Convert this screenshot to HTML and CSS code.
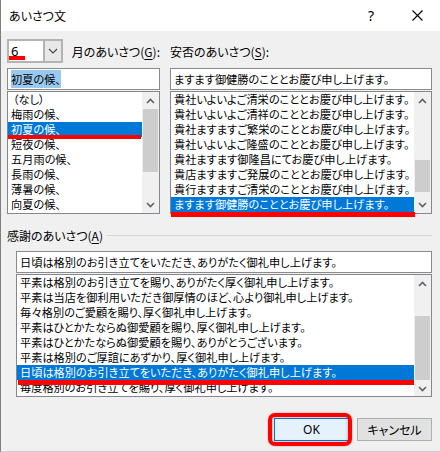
FILE: index.html
```html
<!DOCTYPE html>
<html lang="ja">
<head>
<meta charset="utf-8">
<link rel="stylesheet" href="styles.css">
</head>
<body>
<div class="win">
  <div class="titlebar">
    <span class="title">あいさつ文</span>
    <span class="help">?</span>
    <span class="close"><svg width="11" height="11" viewBox="0 0 11 11"><path d="M0.5 0.5L10.5 10.5M10.5 0.5L0.5 10.5" stroke="#000" stroke-width="1.1" fill="none"/></svg></span>
  </div>
  <div class="content">
    <div class="top">
      <div class="col">
        <div class="row1">
          <div class="combo">
            <span class="combo-val">6</span>
            <span class="combo-btn"><svg width="10" height="6" viewBox="0 0 10 6"><path d="M1 1L5 5L9 1" stroke="#444" stroke-width="1.1" fill="none"/></svg></span>
            <span class="mark mark-combo"></span>
          </div>
          <span class="label lbl-g">月のあいさつ(<u>G</u>):</span>
        </div>
        <div class="textbox"><span class="hl">初夏の候、</span></div>
        <div class="list">
          <div class="items">
            <div class="item none">（なし）</div>
            <div class="item">梅雨の候、</div>
            <div class="item sel">初夏の候、</div>
            <div class="item">短夜の候、</div>
            <div class="item">五月雨の候、</div>
            <div class="item">長雨の候、</div>
            <div class="item">薄暑の候、</div>
            <div class="item">向夏の候、</div>
          </div>
          <div class="sb">
            <span class="arrow"><svg width="9" height="6" viewBox="0 0 9 6"><path d="M1 5L4.5 1.5L8 5" stroke="#606060" stroke-width="1.6" fill="none"/></svg></span>
            <div class="track"><div class="thumb thumb-a"></div></div>
            <span class="arrow"><svg width="9" height="6" viewBox="0 0 9 6"><path d="M1 1L4.5 4.5L8 1" stroke="#606060" stroke-width="1.6" fill="none"/></svg></span>
          </div>
          <span class="mark mark-a"></span>
        </div>
      </div>
      <div class="col">
        <div class="row1">
          <span class="label">安否のあいさつ(<u>S</u>):</span>
        </div>
        <div class="textbox">ますます御健勝のこととお慶び申し上げます。</div>
        <div class="list">
          <div class="items">
            <div class="item">貴社いよいよご清栄のこととお慶び申し上げます。</div>
            <div class="item">貴社いよいよご清祥のこととお慶び申し上げます。</div>
            <div class="item">貴社ますますご繁栄のこととお慶び申し上げます。</div>
            <div class="item">貴社いよいよご隆盛のこととお慶び申し上げます。</div>
            <div class="item">貴社ますます御隆昌にてお慶び申し上げます。</div>
            <div class="item">貴店ますますご発展のこととお慶び申し上げます。</div>
            <div class="item">貴行ますますご清栄のこととお慶び申し上げます。</div>
            <div class="item sel">ますます御健勝のこととお慶び申し上げます。</div>
          </div>
          <div class="sb">
            <span class="arrow"><svg width="9" height="6" viewBox="0 0 9 6"><path d="M1 5L4.5 1.5L8 5" stroke="#606060" stroke-width="1.6" fill="none"/></svg></span>
            <div class="track"><div class="thumb thumb-b"></div></div>
            <span class="arrow"><svg width="9" height="6" viewBox="0 0 9 6"><path d="M1 1L4.5 4.5L8 1" stroke="#606060" stroke-width="1.6" fill="none"/></svg></span>
          </div>
          <span class="mark mark-b"></span>
        </div>
      </div>
    </div>

    <div class="section">
      <span class="label">感謝のあいさつ(<u>A</u>)</span>
      <span class="rule"></span>
    </div>

    <div class="bottom">
      <div class="textbox">日頃は格別のお引き立てをいただき、ありがたく御礼申し上げます。</div>
      <div class="list">
        <div class="items">
          <div class="item">平素は格別のお引き立てを賜り、ありがたく厚く御礼申し上げます。</div>
          <div class="item">平素は当店を御利用いただき御厚情のほど、心より御礼申し上げます。</div>
          <div class="item">毎々格別のご愛顧を賜り、厚く御礼申し上げます。</div>
          <div class="item">平素はひとかたならぬ御愛顧を賜り、厚く御礼申し上げます。</div>
          <div class="item">平素はひとかたならぬ御愛顧を賜り、ありがとうございます。</div>
          <div class="item">平素は格別のご厚誼にあずかり、厚く御礼申し上げます。</div>
          <div class="item sel">日頃は格別のお引き立てをいただき、ありがたく御礼申し上げます。</div>
          <div class="item">毎度格別のお引き立てを賜り、厚く御礼申し上げます。</div>
        </div>
        <div class="sb">
          <span class="arrow"><svg width="9" height="6" viewBox="0 0 9 6"><path d="M1 5L4.5 1.5L8 5" stroke="#606060" stroke-width="1.6" fill="none"/></svg></span>
          <div class="track"><div class="thumb thumb-c"></div></div>
          <span class="arrow"><svg width="9" height="6" viewBox="0 0 9 6"><path d="M1 1L4.5 4.5L8 1" stroke="#606060" stroke-width="1.6" fill="none"/></svg></span>
        </div>
        <span class="mark mark-c"></span>
      </div>
    </div>

    <div class="buttons">
      <div class="btn ok">OK<span class="okmark"></span></div>
      <div class="btn">キャンセル</div>
    </div>
  </div>
</div>
</body>
</html>
```
FILE: styles.css
```css
html, body {
  margin: 0;
  padding: 0;
}
body {
  width: 440px;
  height: 452px;
  overflow: hidden;
  background: #f0f0f0;
  font-family: "Noto Sans CJK JP", "Noto Sans", sans-serif;
  font-size: 12px;
  font-feature-settings: "palt";
  color: #000;
}
.win {
  width: 439px;
  height: 451px;
  border-left: 1px solid #7f7f7f;
  border-bottom: 1px solid #cfcfcf;
  background: #f0f0f0;
}
.titlebar {
  height: 31px;
  background: #fff;
  display: flex;
  align-items: center;
}
.title {
  margin-left: 8px;
  font-size: 12px;
  margin-top: -1px;
}
.help {
  margin-left: auto;
  font-family: "Noto Sans", sans-serif;
  font-size: 14px;
  margin-right: 38px;
  margin-top: -1px;
}
.close {
  display: flex;
  margin-right: 17px;
  margin-top: -1px;
}
.content {
  padding: 8px 8px 0 6px;
}
.top {
  display: grid;
  grid-template-columns: 153px 262px;
  column-gap: 10px;
}
.col {
  display: flex;
  flex-direction: column;
}
.row1 {
  height: 24px;
  display: flex;
  align-items: center;
  margin-bottom: 5px;
  white-space: nowrap;
}
.combo {
  position: relative;
  width: 62px;
  height: 24px;
  box-sizing: border-box;
  border: 2px solid #b3b3b3;
  background: #fff;
  display: flex;
  align-items: center;
}
.combo-val {
  flex: 1;
  padding-left: 2px;
  font-family: "Noto Sans", sans-serif;
  font-size: 13px;
}
.combo-btn {
  width: 16px;
  height: 100%;
  border-left: 2px solid #b3b3b3;
  background: #e8e8e8;
  display: flex;
  align-items: center;
  justify-content: center;
}
.lbl-g {
  margin-left: 9px;
}
.label u {
  text-decoration-thickness: 1px;
  text-underline-offset: 2px;
}
.textbox {
  height: 22px;
  box-sizing: border-box;
  border: 1px solid #8a8a8a;
  background: #fff;
  display: flex;
  align-items: center;
  padding-left: 3px;
  white-space: nowrap;
  overflow: hidden;
  margin-bottom: 1px;
  font-size: 11.2px;
}
.hl {
  background: #99c9ef;
  padding: 1px 0;
}
.list {
  position: relative;
  height: 123px;
  box-sizing: border-box;
  border: 1px solid #828790;
  background: #fff;
  display: flex;
}
.items {
  flex: 1;
  overflow: hidden;
  min-width: 0;
}
.item {
  height: 15px;
  line-height: 15px;
  padding-left: 3px;
  white-space: nowrap;
  font-size: 11.2px;
}
.item.none {
  padding-left: 5px;
}
.item.sel {
  background: #0078d7;
  color: #fff;
}
.sb {
  width: 17px;
  background: #f0f0f0;
  display: flex;
  flex-direction: column;
}
.arrow {
  height: 17px;
  display: flex;
  align-items: center;
  justify-content: center;
  flex: none;
}
.track {
  flex: 1;
  display: flex;
  flex-direction: column;
}
.thumb {
  background: #cdcdcd;
  margin: 0 1px;
}
.thumb-a { margin-top: 0; height: 63px; }
.thumb-b { margin-top: 51px; height: 32px; }
.thumb-c { margin-top: 24px; height: 64px; }

.mark {
  position: absolute;
  background: #ff0000;
}
.mark-combo { left: 0; top: 15px; width: 16px; height: 4px; }
.mark-a { left: 0; top: 43px; width: 133px; height: 4px; }
.mark-b { left: 0; top: 120px; width: 244px; height: 5px; }
.mark-c { left: 1px; top: 105px; width: 396px; height: 5px; }

.section {
  margin-top: 14px;
  height: 15px;
  display: flex;
  align-items: center;
  white-space: nowrap;
}
.rule {
  flex: 1;
  height: 1px;
  background: #d7d7d7;
  margin-left: 4px;
}
.bottom {
  margin-top: 8px;
  margin-left: 9px;
  display: flex;
  flex-direction: column;
}
.buttons {
  margin-top: 21px;
  display: flex;
  justify-content: flex-end;
  gap: 8px;
}
.btn {
  position: relative;
  width: 75px;
  height: 23px;
  box-sizing: border-box;
  border: 1px solid #adadad;
  background: #e1e1e1;
  display: flex;
  align-items: center;
  justify-content: center;
}
.btn.ok {
  border-color: #0078d7;
  background: #e5f1fb;
  font-family: "Noto Sans", sans-serif;
  font-size: 12px;
}
.okmark {
  position: absolute;
  left: -7px;
  top: -6px;
  right: -4px;
  bottom: -6px;
  border: 4px solid #ff0000;
  border-radius: 7px;
  box-shadow: inset 0 0 3px rgba(120,0,0,0.4), 0 0 2px rgba(120,0,0,0.4);
}
```
